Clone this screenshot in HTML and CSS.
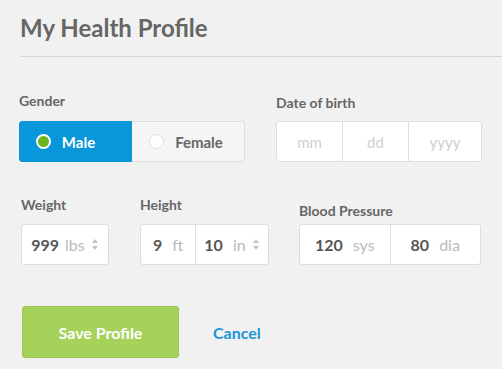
FILE: index.html
```html
<!DOCTYPE html>
<html lang="en">
<head>
  <meta charset="UTF-8">
  <title>My Health Profile</title>
  <link rel="stylesheet" href="styles.css">
</head>
<body>
  <div class="page">
    <h1 class="title">My Health Profile</h1>
    <div class="rule"></div>

    <div class="row row-top">
      <div class="field gender">
        <label>Gender</label>
        <div class="seg">
          <div class="seg-opt active"><span class="radio"></span>Male</div>
          <div class="seg-opt"><span class="radio"></span>Female</div>
        </div>
      </div>
      <div class="field dob">
        <label>Date of birth</label>
        <div class="box">
          <div class="cell ph short">mm</div>
          <div class="cell ph short">dd</div>
          <div class="cell ph">yyyy</div>
        </div>
      </div>
    </div>

    <div class="row row-mid">
      <div class="field weight">
        <label>Weight</label>
        <div class="box">
          <div class="cell"><b>999</b><span class="unit">lbs</span><span class="spin"></span></div>
        </div>
      </div>
      <div class="field height">
        <label>Height</label>
        <div class="box">
          <div class="cell ft"><b>9</b><span class="unit">ft</span></div>
          <div class="cell"><b>10</b><span class="unit">in</span><span class="spin"></span></div>
        </div>
      </div>
      <div class="field bp">
        <label>Blood Pressure</label>
        <div class="box">
          <div class="cell"><b>120</b><span class="unit">sys</span></div>
          <div class="cell"><b>80</b><span class="unit">dia</span></div>
        </div>
      </div>
    </div>

    <div class="actions">
      <button class="save">Save Profile</button>
      <a class="cancel" href="#">Cancel</a>
    </div>
  </div>
</body>
</html>
```

FILE: styles.css
```css
body {
  margin: 0;
  background: #f1f1f1;
  font-family: "Lato", "Open Sans", sans-serif;
  color: #666;
}
.page {
  padding-left: 20px;
}
.title {
  margin: 0;
  padding-top: 13px;
  font-size: 24px;
  font-weight: 700;
  color: #666;
  line-height: 30px;
  height: 30px;
}
.rule {
  margin-top: 13px;
  height: 1px;
  background: #d4d4d4;
}
.row {
  display: flex;
}
.row-top {
  margin-top: 35px;
}
.field label {
  display: block;
  font-size: 14px;
  font-weight: 700;
  color: #666;
  line-height: 17px;
  height: 17px;
  margin-bottom: 12px;
}
.gender {
  margin-left: -1px;
  width: 226px;
}
.dob {
  margin-left: 31px;
  padding-top: 2px;
}
.dob label {
  margin-bottom: 10px;
}
.seg {
  display: flex;
  height: 41px;
}
.seg-opt {
  flex: 0 0 50%;
  box-sizing: border-box;
  display: flex;
  align-items: center;
  justify-content: center;
  gap: 11px;
  font-size: 15px;
  font-weight: 700;
  color: #666;
  background: #f5f5f5;
  border: 1px solid #dedede;
  border-left: none;
  border-radius: 0 3px 3px 0;
  padding-right: 4px;
}
.seg-opt.active {
  background: #0a97d9;
  color: #fff;
  border: 1px solid #0a97d9;
  border-radius: 3px 0 0 3px;
  padding-right: 20px;
}
.radio {
  width: 15px;
  height: 15px;
  border-radius: 50%;
  background: #fff;
  border: 1px solid #ddd;
  box-sizing: border-box;
}
.active .radio {
  border: 2px solid #fff;
  background: #6cb51f;
}
.box {
  display: flex;
  height: 41px;
  background: #fff;
  border: 1px solid #dedede;
  border-radius: 3px;
  box-sizing: border-box;
}
.cell {
  flex: 1;
  display: flex;
  align-items: center;
  justify-content: center;
  font-size: 15px;
  border-left: 1px solid #dedede;
}
.cell:first-child {
  border-left: none;
}
.dob .box {
  width: 206px;
}
.dob .short {
  flex: 0 0 65px;
}
.ph {
  color: #cfcfcf;
}
.cell b {
  font-size: 16px;
  color: #555;
}
.unit {
  color: #bbb;
  margin-left: 6px;
  font-size: 16px;
}
.spin {
  margin-left: 7px;
  width: 7px;
  height: 11px;
  position: relative;
}
.spin::before,
.spin::after {
  content: "";
  position: absolute;
  left: 0;
  border-left: 3.5px solid transparent;
  border-right: 3.5px solid transparent;
}
.spin::before {
  top: 0;
  border-bottom: 4px solid #c4c4c4;
}
.spin::after {
  bottom: 0;
  border-top: 4px solid #c4c4c4;
}
.row-mid {
  margin-top: 34px;
}
.row-mid .field label {
  margin-bottom: 11px;
}
.weight {
  margin-left: 1px;
}
.weight .box {
  width: 88px;
}
.height {
  margin-left: 31px;
}
.height .box {
  width: 129px;
}
.height .ft {
  flex: 0 0 54px;
}
.height .unit {
  margin-left: 10px;
}
.bp {
  margin-left: 30px;
  padding-top: 6px;
}
.row-mid .bp label {
  margin-bottom: 5px;
}
.bp .box {
  width: 182px;
}
.bp .unit {
  margin-left: 10px;
}
.actions {
  display: flex;
  align-items: center;
  margin-top: 41px;
  margin-left: 2px;
}
.save {
  width: 157px;
  height: 52px;
  background: #a6d15a;
  border: 1px solid #9cc651;
  border-radius: 3px;
  color: #fff;
  font-family: inherit;
  font-size: 16px;
  font-weight: 700;
}
.cancel {
  margin-left: 34px;
  color: #1a96d4;
  font-size: 16px;
  font-weight: 700;
  text-decoration: none;
}
```
